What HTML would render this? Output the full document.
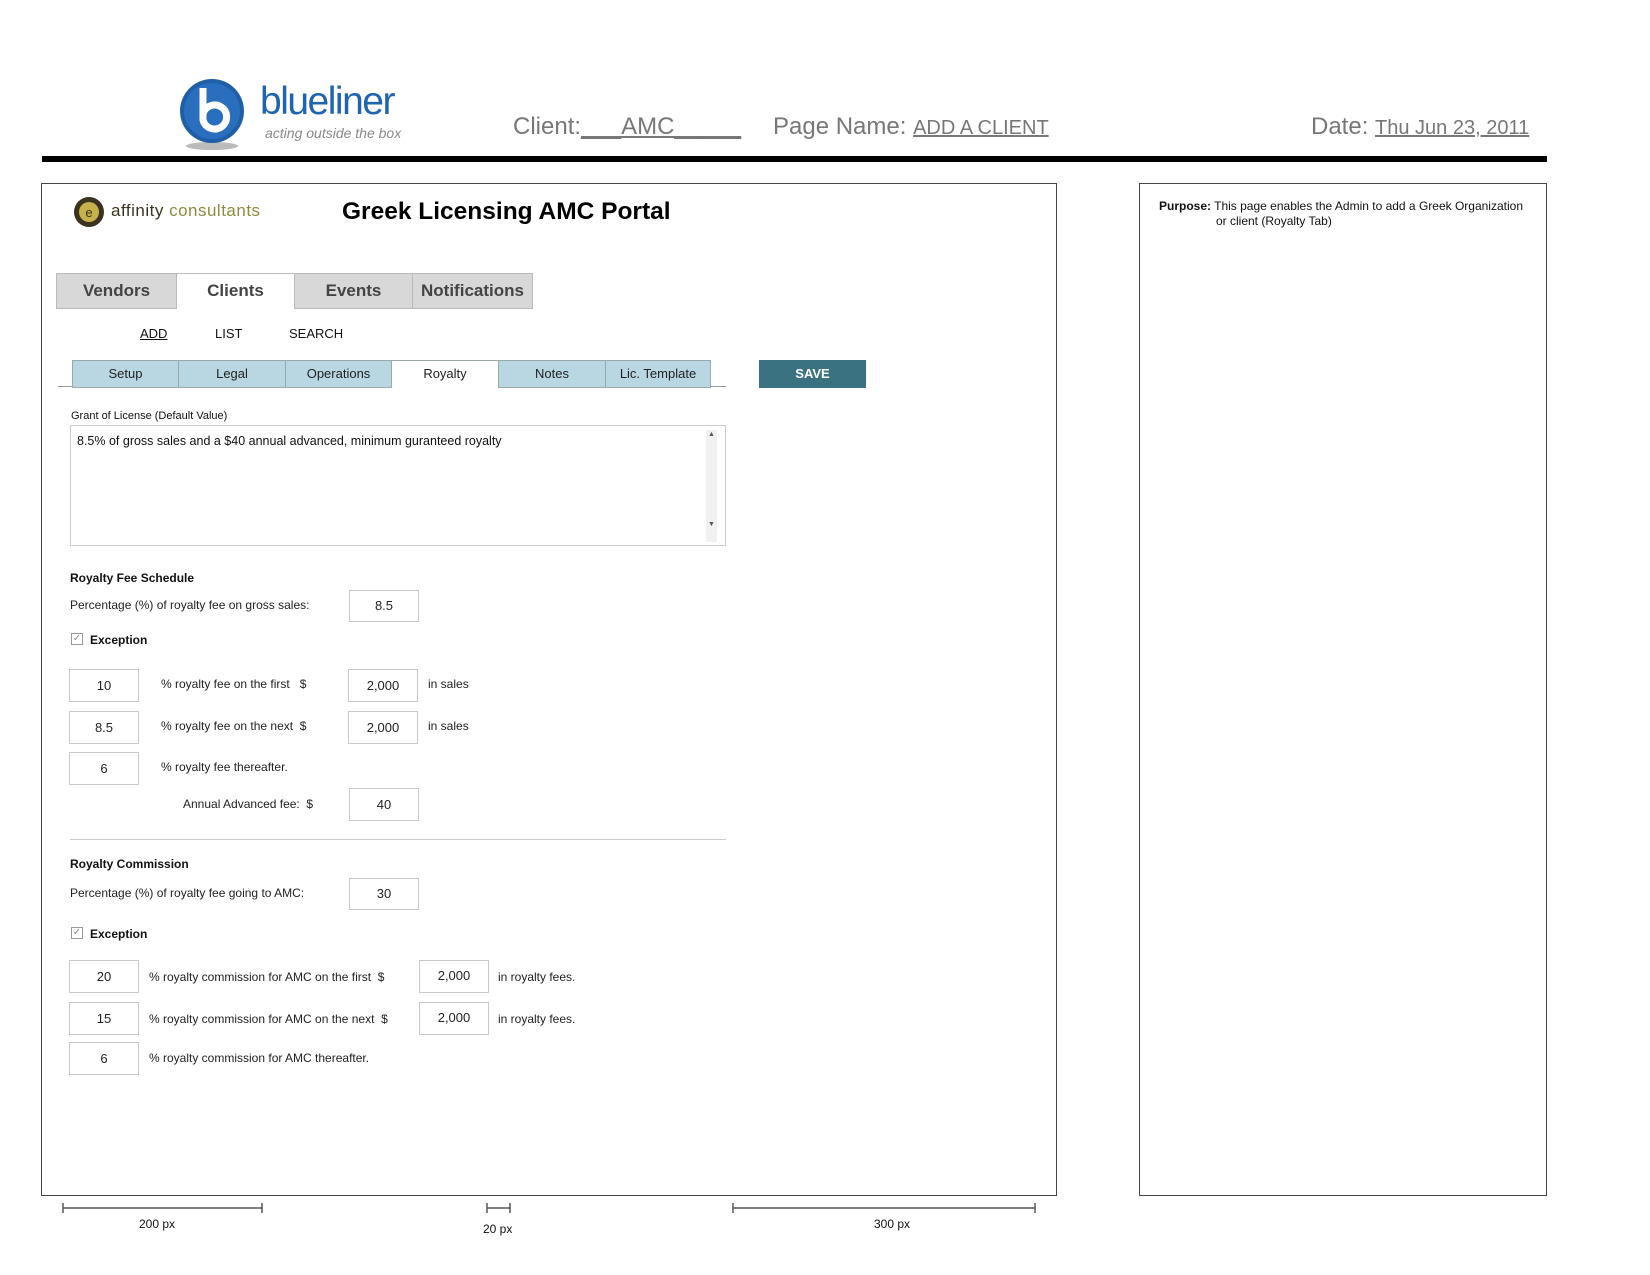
<!DOCTYPE html>
<html><head><meta charset="utf-8"><style>
*{margin:0;padding:0;box-sizing:border-box}
body{width:1650px;height:1275px;background:#fff;position:relative;font-family:"Liberation Sans",sans-serif;color:#111;overflow:hidden}
.a{position:absolute;white-space:nowrap}
.inp{position:absolute;border:1px solid #c8c8c8;background:#fff;font-size:13px;text-align:center;color:#222}
.t{font-size:12px;color:#222}
.b{font-weight:bold;font-size:12px}
.st{position:absolute;top:360px;height:28px;background:#b9d7e2;border:1px solid #9aa;font-size:13px;text-align:center;line-height:26px;color:#222}
.mt{position:absolute;top:273px;height:36px;background:#d8d8d8;border:1px solid #bbb;font-size:17px;font-weight:bold;color:#444;text-align:center;line-height:34px}
.cb{position:absolute;width:12px;height:12px;border:1px solid #999;font-size:10px;line-height:10px;text-align:center;color:#888}
</style></head><body>
<svg class="a" style="left:176px;top:74px" width="72" height="80"><ellipse cx="36" cy="72" rx="26" ry="4" fill="#bbb"/><circle cx="36" cy="37" r="32" fill="#1f5fa8"/><circle cx="36" cy="37" r="28" fill="#2a6fbd"/><path d="M27 14 V46 A12 12 0 1 0 27 40" fill="none" stroke="#fff" stroke-width="7"/></svg>
<div class="a" style="left:260px;top:80px;font-size:39px;color:#1f64b0;letter-spacing:-1.5px">blueliner</div>
<div class="a" style="left:265px;top:125px;font-size:14px;font-style:italic;color:#888">acting outside the box</div>
<div class="a" style="left:513px;top:113px;font-size:24px;color:#777">Client:<span style="text-decoration:underline">___AMC_____</span></div>
<div class="a" style="left:773px;top:113px;font-size:24px;color:#777">Page Name: <span style="font-size:20px;text-decoration:underline">ADD A CLIENT</span></div>
<div class="a" style="left:1311px;top:113px;font-size:24px;color:#777">Date: <span style="font-size:20px;text-decoration:underline">Thu Jun 23, 2011</span></div>
<div class="a" style="left:42px;top:156px;width:1505px;height:6px;background:#000"></div>
<div class="a" style="left:41px;top:183px;width:1016px;height:1013px;border:1px solid #444"></div>
<div class="a" style="left:1139px;top:183px;width:408px;height:1013px;border:1px solid #444"></div>
<div class="a" style="left:1159px;top:199px;font-size:12px;line-height:15px;color:#111"><b>Purpose:</b> This page enables the Admin to add a Greek Organization<br><span style="padding-left:57px">or client (Royalty Tab)</span></div>
<svg class="a" style="left:73px;top:196px" width="32" height="32"><circle cx="16" cy="16" r="15" fill="#3a3320"/><circle cx="16" cy="16" r="10" fill="#c7b14a"/><text x="16" y="21" font-size="13" text-anchor="middle" fill="#3a3320" font-family="Liberation Sans">e</text></svg>
<div class="a" style="left:111px;top:201px;font-size:17px;color:#3a3320;letter-spacing:0.5px">affinity <span style="color:#8f8a3c">consultants</span></div>
<div class="a" style="left:342px;top:198px;font-size:24.5px;font-weight:bold;color:#000">Greek Licensing AMC Portal</div>
<div class="mt" style="left:56px;width:121px">Vendors</div>
<div class="mt" style="left:176px;width:119px;background:#fff;border-bottom:none">Clients</div>
<div class="mt" style="left:294px;width:119px">Events</div>
<div class="mt" style="left:412px;width:121px">Notifications</div>
<div class="a" style="left:140px;top:326px;font-size:13px;text-decoration:underline">ADD</div>
<div class="a" style="left:215px;top:326px;font-size:13px">LIST</div>
<div class="a" style="left:289px;top:326px;font-size:13px">SEARCH</div>
<div class="a" style="left:58px;top:386px;width:668px;height:1px;background:#999"></div>
<div class="st" style="left:72px;width:107px">Setup</div>
<div class="st" style="left:178px;width:108px">Legal</div>
<div class="st" style="left:285px;width:107px">Operations</div>
<div class="st" style="left:391px;width:108px;background:#fff;border-bottom:none">Royalty</div>
<div class="st" style="left:498px;width:108px">Notes</div>
<div class="st" style="left:605px;width:106px">Lic. Template</div>
<div class="a" style="left:759px;top:360px;width:107px;height:28px;background:#3a7282;color:#fff;font-weight:bold;font-size:13px;text-align:center;line-height:28px">SAVE</div>
<div class="a" style="left:71px;top:410px;font-size:11px">Grant of License (Default Value)</div>
<div class="a" style="left:70px;top:425px;width:656px;height:121px;border:1px solid #ccc"></div>
<div class="a" style="left:706px;top:430px;width:11px;height:112px;background:#f0f0f0;font-size:7px;color:#555;text-align:center;line-height:10px">▲<br><br><br><br><br><br><br><br><br>▼</div>
<div class="a" style="left:77px;top:434px;font-size:12.5px">8.5% of gross sales and a $40 annual advanced, minimum guranteed royalty</div>
<div class="a b" style="left:70px;top:571px">Royalty Fee Schedule</div>
<div class="a t" style="left:70px;top:598px">Percentage (%) of royalty fee on gross sales:</div>
<div class="inp" style="left:349px;top:590px;width:70px;height:32px;line-height:30px">8.5</div>
<div class="cb" style="left:71px;top:633px">✓</div>
<div class="a b" style="left:90px;top:633px">Exception</div>
<div class="inp" style="left:69px;top:669px;width:70px;height:33px;line-height:31px">10</div>
<div class="a t" style="left:161px;top:677px">% royalty fee on the first &nbsp; $</div>
<div class="inp" style="left:348px;top:669px;width:70px;height:33px;line-height:31px">2,000</div>
<div class="a t" style="left:428px;top:677px">in sales</div>
<div class="inp" style="left:69px;top:711px;width:70px;height:33px;line-height:31px">8.5</div>
<div class="a t" style="left:161px;top:719px">% royalty fee on the next &nbsp;$</div>
<div class="inp" style="left:348px;top:711px;width:70px;height:33px;line-height:31px">2,000</div>
<div class="a t" style="left:428px;top:719px">in sales</div>
<div class="inp" style="left:69px;top:752px;width:70px;height:33px;line-height:31px">6</div>
<div class="a t" style="left:161px;top:760px">% royalty fee thereafter.</div>
<div class="a t" style="left:183px;top:797px">Annual Advanced fee: &nbsp;$</div>
<div class="inp" style="left:349px;top:788px;width:70px;height:33px;line-height:31px">40</div>
<div class="a" style="left:70px;top:839px;width:656px;height:1px;background:#ccc"></div>
<div class="a b" style="left:70px;top:857px">Royalty Commission</div>
<div class="a t" style="left:70px;top:886px">Percentage (%) of royalty fee going to AMC:</div>
<div class="inp" style="left:349px;top:878px;width:70px;height:32px;line-height:30px">30</div>
<div class="cb" style="left:71px;top:927px">✓</div>
<div class="a b" style="left:90px;top:927px">Exception</div>
<div class="inp" style="left:69px;top:960px;width:70px;height:33px;line-height:31px">20</div>
<div class="a t" style="left:149px;top:970px">% royalty commission for AMC on the first &nbsp;$</div>
<div class="inp" style="left:419px;top:960px;width:70px;height:33px;line-height:29px">2,000</div>
<div class="a t" style="left:498px;top:970px">in royalty fees.</div>
<div class="inp" style="left:69px;top:1002px;width:70px;height:33px;line-height:31px">15</div>
<div class="a t" style="left:149px;top:1012px">% royalty commission for AMC on the next &nbsp;$</div>
<div class="inp" style="left:419px;top:1002px;width:70px;height:33px;line-height:29px">2,000</div>
<div class="a t" style="left:498px;top:1012px">in royalty fees.</div>
<div class="inp" style="left:69px;top:1042px;width:70px;height:33px;line-height:31px">6</div>
<div class="a t" style="left:149px;top:1051px">% royalty commission for AMC thereafter.</div>
<svg class="a" style="left:0;top:1198px" width="1100" height="20"><g stroke="#555" stroke-width="1.5"><line x1="63" y1="10" x2="262" y2="10"/><line x1="63" y1="5" x2="63" y2="15"/><line x1="262" y1="5" x2="262" y2="15"/><line x1="487" y1="10" x2="510" y2="10"/><line x1="487" y1="5" x2="487" y2="15"/><line x1="510" y1="5" x2="510" y2="15"/><line x1="733" y1="10" x2="1035" y2="10"/><line x1="733" y1="5" x2="733" y2="15"/><line x1="1035" y1="5" x2="1035" y2="15"/></g></svg>
<div class="a" style="left:139px;top:1217px;font-size:12px">200 px</div>
<div class="a" style="left:483px;top:1222px;font-size:12px">20 px</div>
<div class="a" style="left:874px;top:1217px;font-size:12px">300 px</div>
</body></html>
